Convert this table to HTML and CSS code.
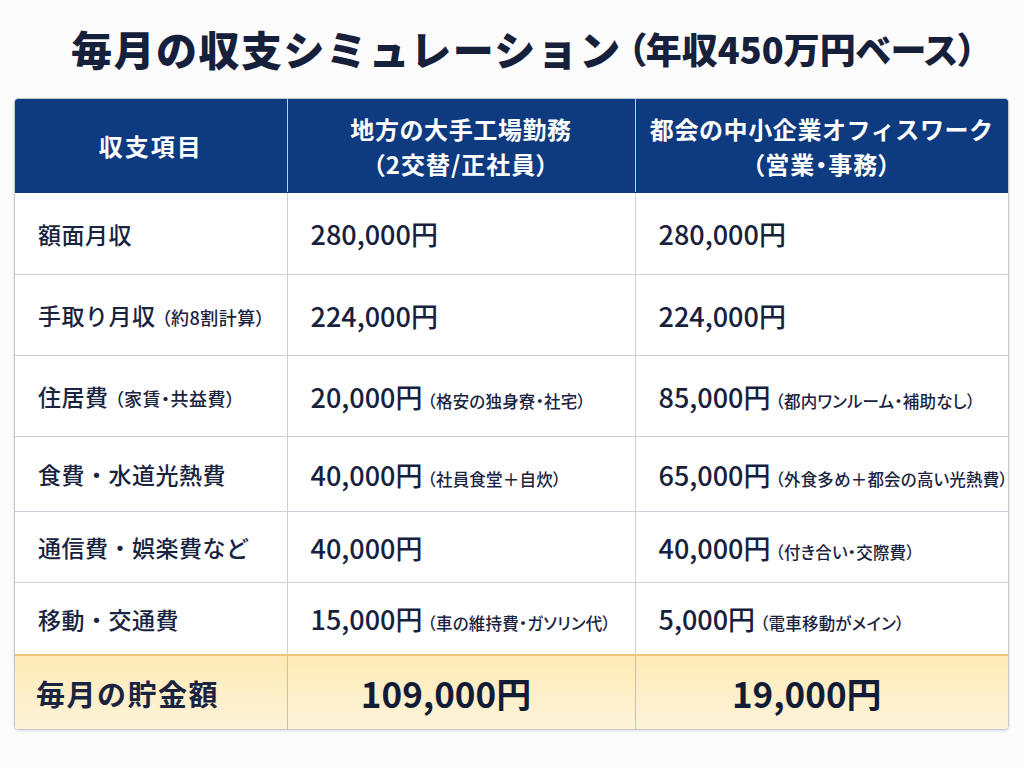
FILE: index.html
```html
<!DOCTYPE html>
<html lang="ja">
<head>
<meta charset="utf-8">
<title>毎月の収支シミュレーション</title>
<link rel="stylesheet" href="styles.css">
</head>
<body>
<div class="page">
  <h1 class="title">毎月の収支シミュレーション<span class="title-sub">（年収450万円ベース）</span></h1>
  <div class="table-wrap">
    <table class="sim">
      <colgroup>
        <col class="c1"><col class="c2"><col class="c3">
      </colgroup>
      <thead>
        <tr class="r-head">
          <th>収支項目</th>
          <th>地方の大手工場勤務<br><span class="hsub">（2交替/正社員）</span></th>
          <th>都会の中小企業オフィスワーク<br><span class="hsub">（営業・事務）</span></th>
        </tr>
      </thead>
      <tbody>
        <tr class="r1">
          <td class="label">額面月収</td>
          <td><span class="amt">280,000円</span></td>
          <td><span class="amt">280,000円</span></td>
        </tr>
        <tr class="r2">
          <td class="label">手取り月収<span class="lnote">（約8割計算）</span></td>
          <td><span class="amt">224,000円</span></td>
          <td><span class="amt">224,000円</span></td>
        </tr>
        <tr class="r3">
          <td class="label">住居費<span class="lnote">（家賃・共益費）</span></td>
          <td><span class="amt">20,000円</span><span class="note">（格安の独身寮・社宅）</span></td>
          <td><span class="amt">85,000円</span><span class="note">（都内ワンルーム・補助なし）</span></td>
        </tr>
        <tr class="r4">
          <td class="label">食費・水道光熱費</td>
          <td><span class="amt">40,000円</span><span class="note">（社員食堂＋自炊）</span></td>
          <td><span class="amt">65,000円</span><span class="note">（外食多め＋都会の高い光熱費）</span></td>
        </tr>
        <tr class="r5">
          <td class="label">通信費・娯楽費など</td>
          <td><span class="amt">40,000円</span></td>
          <td><span class="amt">40,000円</span><span class="note">（付き合い・交際費）</span></td>
        </tr>
        <tr class="r6">
          <td class="label">移動・交通費</td>
          <td><span class="amt">15,000円</span><span class="note">（車の維持費・ガソリン代）</span></td>
          <td><span class="amt">5,000円</span><span class="note">（電車移動がメイン）</span></td>
        </tr>
        <tr class="r-total">
          <td class="label">毎月の貯金額</td>
          <td class="total">109,000円</td>
          <td class="total">19,000円</td>
        </tr>
      </tbody>
    </table>
  </div>
</div>
</body>
</html>
```

FILE: styles.css
```css
html, body {
  margin: 0;
  padding: 0;
  background: #fcfcfd;
}

body {
  font-family: "Noto Sans CJK JP", "Noto Sans", sans-serif;
  color: #1a2340;
}

.page {
  width: 1024px;
  height: 768px;
  padding-left: 14px;
  box-sizing: border-box;
}

.title {
  margin: 0;
  width: 995px;
  height: 98px;
  display: flex;
  align-items: center;
  justify-content: center;
  font-size: 41px;
  font-weight: 900;
  letter-spacing: 1.5px;
  color: #16203b;
  white-space: nowrap;
  padding-left: 24px;
  padding-bottom: 2px;
  box-sizing: border-box;
}

.title-sub {
  font-size: 36px;
  letter-spacing: 0;
  font-feature-settings: "palt";
  margin-left: 6px;
}

.table-wrap {
  width: 995px;
  border: 1px solid #c3c8d3;
  border-radius: 4px;
  overflow: hidden;
  box-sizing: border-box;
  box-shadow: 0 1px 3px rgba(20, 30, 60, 0.12);
}

.sim {
  width: 100%;
  border-collapse: collapse;
  table-layout: fixed;
}

.c1 { width: 272px; }
.c2 { width: 348px; }
.c3 { width: auto; }

.sim th,
.sim td {
  padding: 0;
  border-right: 1px solid #cdd1da;
  border-bottom: 1px solid #cdd1da;
  white-space: nowrap;
}

.sim th:last-child,
.sim td:last-child {
  border-right: none;
}

.r-head th {
  height: 93px;
  background: #0e3a7f;
  color: #ffffff;
  font-size: 24px;
  font-weight: 700;
  line-height: 35px;
  letter-spacing: 0.6px;
  text-align: center;
  border-right-color: #c8ccd6;
  border-bottom-color: #0e3a7f;
}

.r-head th:first-child {
  letter-spacing: 2px;
}

.hsub {
  font-feature-settings: "palt";
  letter-spacing: 1px;
}

.r1 td { height: 81px; }
.r2 td { height: 80px; }
.r3 td { height: 80px; }
.r4 td { height: 74px; }
.r5 td { height: 70px; }
.r6 td { height: 71px; }

.sim td {
  background: #ffffff;
  padding-left: 23px;
  vertical-align: middle;
}

.sim td.label {
  padding-left: 23px;
  font-size: 23px;
  font-weight: 500;
  letter-spacing: 0.5px;
}

.lnote {
  font-size: 18px;
  font-weight: 500;
  letter-spacing: 0.5px;
  font-feature-settings: "palt";
  margin-left: 6px;
}

.amt {
  font-size: 27px;
  font-weight: 500;
  color: #17213d;
}

.note {
  font-size: 16.5px;
  font-weight: 500;
  letter-spacing: 0.2px;
  font-feature-settings: "palt";
  margin-left: 5px;
}

.r-total td {
  height: 73px;
  background: linear-gradient(#fdeab6, #fdf3d9);
  border-top: 2px solid #ebc675;
  border-bottom: none;
  border-right-color: #e7c06a;
}

.r-total td.label {
  font-size: 29px;
  font-weight: 700;
  letter-spacing: 1.5px;
  padding-left: 21px;
}

.r-total td.total {
  padding-left: 0;
  padding-right: 30px;
  text-align: center;
  font-size: 35px;
  font-weight: 700;
  color: #131c36;
}
```
